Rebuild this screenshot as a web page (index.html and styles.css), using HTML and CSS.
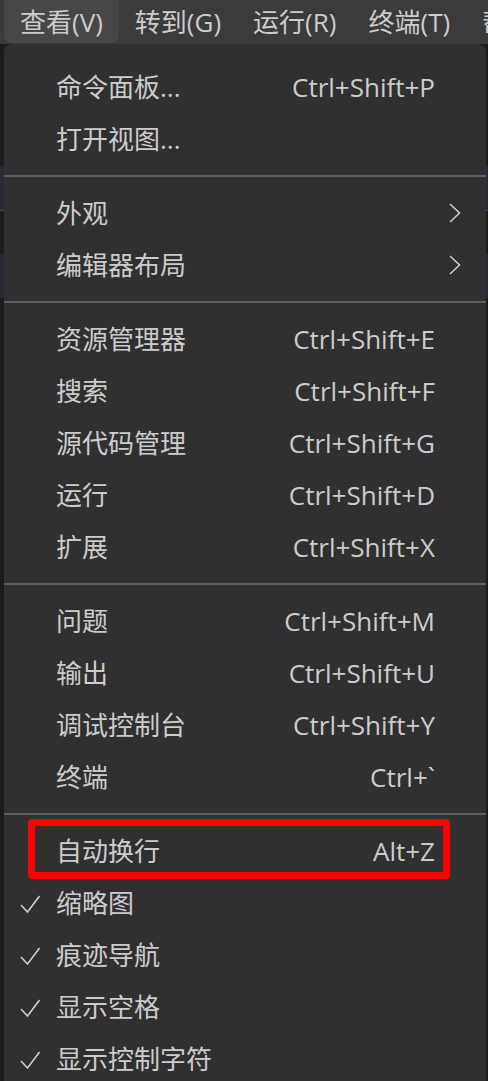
FILE: index.html
```html
<!DOCTYPE html>
<html lang="zh-CN">
<head>
<meta charset="utf-8">
<title>查看菜单</title>
<link rel="stylesheet" href="styles.css">
</head>
<body>
<header class="menubar">
  <span class="menubar-item active">查看(V)</span>
  <span class="menubar-item">转到(G)</span>
  <span class="menubar-item">运行(R)</span>
  <span class="menubar-item">终端(T)</span>
  <span class="menubar-item">帮助(H)</span>
</header>
<div class="stage">
  <nav class="menu">
    <div class="row"><span class="check"></span><span class="label">命令面板...</span><span class="key">Ctrl+Shift+P</span><span class="sub"></span></div>
    <div class="row"><span class="check"></span><span class="label">打开视图...</span><span class="key"></span><span class="sub"></span></div>
    <div class="sep"></div>
    <div class="row"><span class="check"></span><span class="label">外观</span><span class="key"></span><span class="sub"><svg class="chev" viewBox="0 0 12 20" width="12" height="20"><polyline points="1,1 10.5,10 1,19" fill="none" stroke="#cccccc" stroke-width="1.6"/></svg></span></div>
    <div class="row"><span class="check"></span><span class="label">编辑器布局</span><span class="key"></span><span class="sub"><svg class="chev" viewBox="0 0 12 20" width="12" height="20"><polyline points="1,1 10.5,10 1,19" fill="none" stroke="#cccccc" stroke-width="1.6"/></svg></span></div>
    <div class="sep"></div>
    <div class="row"><span class="check"></span><span class="label">资源管理器</span><span class="key">Ctrl+Shift+E</span><span class="sub"></span></div>
    <div class="row"><span class="check"></span><span class="label">搜索</span><span class="key">Ctrl+Shift+F</span><span class="sub"></span></div>
    <div class="row"><span class="check"></span><span class="label">源代码管理</span><span class="key">Ctrl+Shift+G</span><span class="sub"></span></div>
    <div class="row"><span class="check"></span><span class="label">运行</span><span class="key">Ctrl+Shift+D</span><span class="sub"></span></div>
    <div class="row"><span class="check"></span><span class="label">扩展</span><span class="key">Ctrl+Shift+X</span><span class="sub"></span></div>
    <div class="sep"></div>
    <div class="row"><span class="check"></span><span class="label">问题</span><span class="key">Ctrl+Shift+M</span><span class="sub"></span></div>
    <div class="row"><span class="check"></span><span class="label">输出</span><span class="key">Ctrl+Shift+U</span><span class="sub"></span></div>
    <div class="row"><span class="check"></span><span class="label">调试控制台</span><span class="key">Ctrl+Shift+Y</span><span class="sub"></span></div>
    <div class="row"><span class="check"></span><span class="label">终端</span><span class="key">Ctrl+`</span><span class="sub"></span></div>
    <div class="sep"></div>
    <div class="row marked"><span class="check"></span><span class="label">自动换行</span><span class="key">Alt+Z</span><span class="sub"></span></div>
    <div class="row"><span class="check"><svg viewBox="0 0 20 18" width="20" height="18"><polyline points="1,10 7.5,17 19.5,1" fill="none" stroke="#cccccc" stroke-width="1.6"/></svg></span><span class="label">缩略图</span><span class="key"></span><span class="sub"></span></div>
    <div class="row"><span class="check"><svg viewBox="0 0 20 18" width="20" height="18"><polyline points="1,10 7.5,17 19.5,1" fill="none" stroke="#cccccc" stroke-width="1.6"/></svg></span><span class="label">痕迹导航</span><span class="key"></span><span class="sub"></span></div>
    <div class="row"><span class="check"><svg viewBox="0 0 20 18" width="20" height="18"><polyline points="1,10 7.5,17 19.5,1" fill="none" stroke="#cccccc" stroke-width="1.6"/></svg></span><span class="label">显示空格</span><span class="key"></span><span class="sub"></span></div>
    <div class="row"><span class="check"><svg viewBox="0 0 20 18" width="20" height="18"><polyline points="1,10 7.5,17 19.5,1" fill="none" stroke="#cccccc" stroke-width="1.6"/></svg></span><span class="label">显示控制字符</span><span class="key"></span><span class="sub"></span></div>
  </nav>
</div>
</body>
</html>
```

FILE: styles.css
```css
* { box-sizing: border-box; }

html, body {
  margin: 0;
  padding: 0;
  height: 100%;
  overflow: hidden;
}

body {
  background: #1c1c1c;
  font-family: "Open Sans", "Noto Sans CJK SC", sans-serif;
  font-size: 26px;
  color: #cccccc;
}

.menubar {
  display: flex;
  height: 44px;
  background: #3b3b3b;
  padding-left: 4px;
  white-space: nowrap;
  overflow: hidden;
}

.menubar-item {
  padding: 0 16px;
  height: 43px;
  line-height: 44px;
  border-radius: 0 0 8px 8px;
  color: #cccccc;
}

.menubar-item.active {
  background: #474747;
}

.stage {
  padding: 0 2px 0 4px;
  background: linear-gradient(to bottom,
    #1c1c1c 0 122px,
    #2a2a36 122px 166px,
    #4a4a4a 166px 167px,
    #1c1c1c 167px 210px,
    #2a2a36 210px 254px,
    #1c1c1c 254px);
}

.menu {
  background: #303030;
  border-radius: 8px 8px 0 0;
  padding-top: 17px;
}

.row {
  position: relative;
  display: flex;
  align-items: center;
  height: 52px;
  line-height: 52px;
}

.check {
  width: 52px;
  display: flex;
  align-items: center;
  padding-left: 16px;
}

.check svg { display: block; margin-top: 1px; }

.label {
  flex: 1;
}

.key {
  text-align: right;
}

.sub {
  width: 51px;
  display: flex;
  align-items: center;
  padding-left: 14px;
}

.chev { display: block; }

.sep {
  height: 2px;
  margin: 10px 0;
  background: #5e5e5e;
}

.marked::after {
  content: "";
  position: absolute;
  left: 24px;
  right: 36px;
  top: -6px;
  bottom: -2px;
  border: 7px solid #ff0000;
  border-radius: 4px;
}
```
